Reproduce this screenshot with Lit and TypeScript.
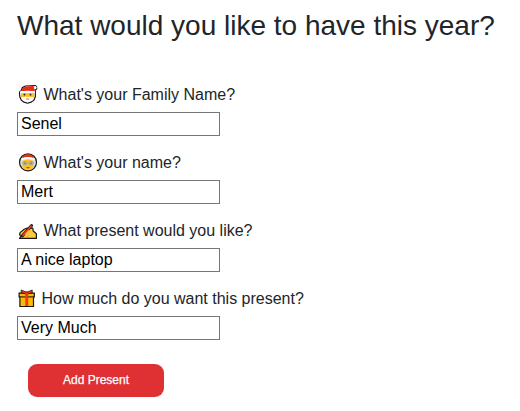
import { LitElement, html, svg, css } from "lit";
import { customElement, state } from "lit/decorators.js";

const santa = svg`
  <path d="M3 7 4.4 3.6 7.4 2 17 1.5 18.5 2.4 18.7 4.8 17.3 6.2 17.4 12.5 16 16 13 18.2 9.6 19.1 6 18.2 3.2 16 1.8 12.8 1.5 9.5 1.8 7.5Z" fill="#fff" stroke="#171717" stroke-width="1.2" stroke-linejoin="round"/>
  <path d="M3 9H16.3V13L14.8 15H4.4L3 13Z" fill="#ffc020"/>
  <path d="M3.2 7 4.9 4.1 7.7 2.6 15.5 2.1 16.8 5.4 16.4 7.4Z" fill="#e92c16"/>
  <path d="M2.2 7.3Q9.6 6 16.9 7.3V9.3Q9.6 8 2.1 9.3Z" fill="#fff"/>
  <circle cx="17.3" cy="3.6" r="1.3" fill="#fff"/>
  <path d="M3.5 13.6 7.8 12.8 9.6 13.3 11.4 12.8 15.8 13.6 14.6 16.6 9.6 18.4 4.8 16.6Z" fill="#fff"/>
  <path d="M6.5 9.7V11.4M12.5 9.7V11.4" stroke="#302b24" stroke-width="1.6"/>
  <path d="M8 15H11.2" stroke="#ec6d50" stroke-width="1.1"/>`;

const mrsClaus = svg`
  <circle cx="10" cy="10.3" r="8.5" fill="#e0e0e0" stroke="#171717" stroke-width="1.2"/>
  <path d="M4 10 6 8.2 10 7.6 14 8.2 16 10 15.5 14.5 13.2 17.3 10 18.3 6.8 17.3 4.5 14.5Z" fill="#ffc020"/>
  <path d="M4.2 5.6Q5.9 2.3 10 2.3T15.8 5.6L14.7 6.5H5.3Z" fill="#e92c16"/>
  <path d="M3.5 6.4Q10 3.8 16.5 6.4V8Q10 5.8 3.5 8Z" fill="#fff"/>
  <rect x="4.8" y="9.7" width="4.3" height="3" rx="1" fill="#d8bd68" stroke="#8fa6ae" stroke-width=".9"/>
  <rect x="10.9" y="9.7" width="4.3" height="3" rx="1" fill="#d8bd68" stroke="#8fa6ae" stroke-width=".9"/>
  <path d="M7 10.4V11.9M13 10.4V11.9" stroke="#5c6264" stroke-width="1.1"/>
  <path d="M8 15H12L11 16.3H9Z" fill="#e83a25"/>`;

const writing = svg`
  <path d="M1.5 18.4 3.5 15.5 1.6 15 2 12.6 6.2 9.2 9.2 8 14.8 8.2 15.2 11 18.4 13.8V18.4Z" fill="#ffc83d" stroke="#171717" stroke-width="1.2" stroke-linejoin="round"/>
  <path d="M4.2 16 13.6 5.6" stroke="#171717" stroke-width="3" stroke-linecap="round"/>
  <path d="M5 14.5H9.5L12 10.8 10.2 9.5Z" fill="#ffc83d"/>
  <path d="M4.2 16 13.6 5.6" stroke="#e83a25" stroke-width="1.7"/>
  <path d="M8.5 16.8 11 15" stroke="#dc9b22" stroke-width=".8"/>`;

const gift = svg`
  <path d="M1.9 8.8H15.5V18.5H1.9Z" fill="#ffb900" stroke="#171717" stroke-width="1.2"/>
  <path d="M1.1 5.2H16.3V8.9H1.1Z" fill="#ffb900" stroke="#171717" stroke-width="1.2"/>
  <path d="M3.2 5V2L7.4 3.8H10.1L14.2 2V5L10 5.8H7.6Z" fill="#f03a17" stroke="#171717" stroke-width=".8"/>
  <path d="M7.3 5H10.2V18H7.3Z" fill="#f03a17"/>
  <path d="M2.5 9.2H7.3M10.2 9.2H14.9" stroke="#c78418" stroke-width=".9"/>`;

@customElement("app-root")
export class AppRoot extends LitElement {
  static styles = css`
    :host {
      display: block;
      min-height: 411px;
      box-sizing: border-box;
      padding: 9px 0 0 17px;
      background: #fff;
      color: #212529;
      font: 16px/24px "Liberation Sans", Arial, sans-serif;
    }
    h1 {
      margin: 0 0 40px;
      font-size: 28px;
      font-weight: 400;
      line-height: 34px;
      white-space: nowrap;
    }
    .field {
      display: flex;
      flex-direction: column;
      align-items: flex-start;
      height: 68px;
    }
    .label {
      display: flex;
      height: 29px;
      white-space: pre;
    }
    .icon {
      width: 22px;
      height: 20px;
      margin: 1px 4.5px 0 0;
    }
    .icon.narrow {
      width: 20px;
    }
    input {
      box-sizing: border-box;
      width: 203px;
      height: 24px;
      margin: 0;
      padding: 1px 3px;
      border: 1px solid #767676;
      border-radius: 0;
      background: #fff;
      color: #000;
      font: inherit;
      line-height: 20px;
      outline: none;
    }
    button {
      display: block;
      width: 136px;
      height: 33px;
      margin: 9px 0 0 11px;
      padding: 0;
      border: 0;
      border-radius: 9px;
      background: #df3033;
      color: #fff;
      font: 12px/33px "Liberation Sans", Arial, sans-serif;
      -webkit-text-stroke: 0.25px #fff;
    }
  `;

  @state() private fields = [
    { label: "What's your Family Name?", value: "Senel", icon: santa, narrow: false },
    { label: "What's your name?", value: "Mert", icon: mrsClaus, narrow: false },
    { label: "What present would you like?", value: "A nice laptop", icon: writing, narrow: false },
    { label: "How much do you want this present?", value: "Very Much", icon: gift, narrow: true },
  ];

  render() {
    return html`
      <h1>What would you like to have this year?</h1>
      ${this.fields.map(
        (f, i) => html`
          <div class="field">
            <label class="label" for="field-${i}"><svg
                class="icon ${f.narrow ? "narrow" : ""}"
                viewBox=${f.narrow ? "-1 0 20 20" : "-1 0 22 20"}
              >${f.icon}</svg>${f.label}</label>
            <input id="field-${i}" type="text" .value=${f.value} />
          </div>
        `
      )}
      <button type="button">Add Present</button>
    `;
  }
}
